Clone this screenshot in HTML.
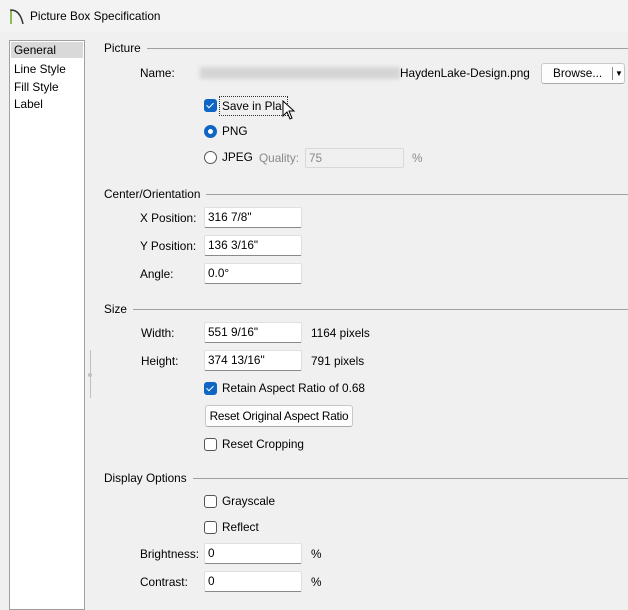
<html><head><style>
body{margin:0;width:628px;height:603px;background:#f0f0f0;font-family:"Liberation Sans",sans-serif;font-size:11.8px;color:#000;position:relative;overflow:hidden}
.a{position:absolute;white-space:nowrap;line-height:14px}
.t{transform:translateY(-7px)}
.hdr{position:absolute;left:104px;right:0;height:14px;display:flex;align-items:center;transform:translateY(-7px);white-space:nowrap}
.hdr:after{content:"";flex:1;border-top:1px solid #a0a0a0;margin-left:6px}
.in{position:absolute;background:#fff;border:1px solid #e0e0e0;border-bottom:1px solid #8a8a8a;box-sizing:border-box;height:21px;padding-left:3px;line-height:19px;border-radius:2px;white-space:nowrap}
.cb{position:absolute;width:13px;height:13px;border:1px solid #555;border-radius:3px;box-sizing:border-box;background:#fff}
.cb.on{background:#0f65c4;border-color:#0f65c4}
.cb.on:after{content:"";position:absolute;left:3px;top:1px;width:3px;height:6px;border:solid #fff;border-width:0 1.5px 1.5px 0;transform:rotate(45deg)}
.rb{position:absolute;width:13px;height:13px;border:1px solid #555;border-radius:50%;box-sizing:border-box;background:#fff}
.rb.on{border:4px solid #0f65c4}
.btn{position:absolute;background:#fdfdfd;border:1px solid #c8c8c8;border-bottom-color:#a8a8a8;border-radius:3px;box-sizing:border-box;text-align:center;white-space:nowrap}
</style></head><body>
<div style="position:absolute;left:0;top:0;width:628px;height:32px;background:#f3f3f3"></div>
<svg style="position:absolute;left:9px;top:7px" width="16" height="18"><path d="M2 17V3 Q11 3 14 17" fill="none" stroke="#333" stroke-width="1.5"/><path d="M2 17V4" stroke="#8dc63f" stroke-width="1.5"/></svg>
<div class="a t" style="left:30px;top:16px">Picture Box Specification</div>
<div style="position:absolute;left:9px;top:40px;width:76px;height:570px;background:#fff;border:1px solid #a0a0a0;box-sizing:border-box"></div>
<div style="position:absolute;left:11px;top:42px;width:72px;height:16px;background:#d9d9d9"></div>
<div class="a t" style="left:14px;top:50px">General</div>
<div class="a t" style="left:14px;top:69px">Line Style</div>
<div class="a t" style="left:14px;top:87px">Fill Style</div>
<div class="a t" style="left:14px;top:104px">Label</div>
<div style="position:absolute;left:90px;top:350px;height:48px;border-left:1px solid #c0c0c0"></div>
<div style="position:absolute;left:88px;top:373px;width:4px;height:4px;border-radius:50%;background:#c0c0c0"></div>

<div class="hdr" style="top:48px">Picture</div>
<div class="a t" style="left:140px;top:73px">Name:</div>
<div style="position:absolute;left:200px;top:67px;width:200px;height:12px;background:#d4d4d4;filter:blur(2px)"></div>
<div class="a t" style="left:400px;top:73px">HaydenLake-Design.png</div>
<div class="btn" style="left:541px;top:63px;width:84px;height:21px;line-height:19px;text-align:left;padding-left:11px">Browse...<span style="position:absolute;left:70px;top:3px;height:13px;border-left:1px solid #888"></span><span style="position:absolute;left:73px;top:0;font-size:8px">▼</span></div>
<div class="cb on" style="left:204px;top:99px"></div>
<div style="position:absolute;left:219px;top:96px;width:69px;height:20px;border:1px dotted #333;box-sizing:border-box"></div>
<div class="a t" style="left:222px;top:106px">Save in Plan</div>
<svg style="position:absolute;left:282px;top:100px" width="14" height="22"><path d="M1 1V16L5 12L8 19L10 18L7 11H12Z" fill="#fff" stroke="#000"/></svg>
<div class="rb on" style="left:204px;top:125px"></div>
<div class="a t" style="left:222px;top:131px">PNG</div>
<div class="rb" style="left:204px;top:151px"></div>
<div class="a t" style="left:222px;top:157px">JPEG</div>
<div class="a t" style="left:259px;top:158px;color:#8a8a8a">Quality:</div>
<div class="in" style="left:305px;top:148px;width:99px;height:20px;background:#f0f0f0;border-color:#d8d8d8;color:#8a8a8a">75</div>
<div class="a t" style="left:412px;top:158px;color:#8a8a8a">%</div>

<div class="hdr" style="top:194px">Center/Orientation</div>
<div class="a t" style="left:140px;top:218px">X Position:</div>
<div class="in" style="left:204px;top:207px;width:98px">316 7/8"</div>
<div class="a t" style="left:140px;top:246px">Y Position:</div>
<div class="in" style="left:204px;top:235px;width:98px">136 3/16"</div>
<div class="a t" style="left:140px;top:274px">Angle:</div>
<div class="in" style="left:204px;top:263px;width:98px">0.0°</div>

<div class="hdr" style="top:309px">Size</div>
<div class="a t" style="left:141px;top:333px">Width:</div>
<div class="in" style="left:204px;top:322px;width:98px">551 9/16"</div>
<div class="a t" style="left:311px;top:333px">1164 pixels</div>
<div class="a t" style="left:141px;top:361px">Height:</div>
<div class="in" style="left:204px;top:350px;width:98px">374 13/16"</div>
<div class="a t" style="left:311px;top:361px">791 pixels</div>
<div class="cb on" style="left:204px;top:382px"></div>
<div class="a t" style="left:222px;top:388px">Retain Aspect Ratio of 0.68</div>
<div class="btn" style="left:205px;top:405px;width:148px;height:22px;line-height:20px;letter-spacing:-0.2px">Reset Original Aspect Ratio</div>
<div class="cb" style="left:204px;top:438px"></div>
<div class="a t" style="left:222px;top:444px">Reset Cropping</div>

<div class="hdr" style="top:478px">Display Options</div>
<div class="cb" style="left:204px;top:495px"></div>
<div class="a t" style="left:222px;top:501px">Grayscale</div>
<div class="cb" style="left:204px;top:521px"></div>
<div class="a t" style="left:222px;top:527px">Reflect</div>
<div class="a t" style="left:140px;top:554px">Brightness:</div>
<div class="in" style="left:204px;top:543px;width:98px">0</div>
<div class="a t" style="left:311px;top:554px">%</div>
<div class="a t" style="left:140px;top:582px">Contrast:</div>
<div class="in" style="left:204px;top:571px;width:98px">0</div>
<div class="a t" style="left:311px;top:582px">%</div>
</body></html>
